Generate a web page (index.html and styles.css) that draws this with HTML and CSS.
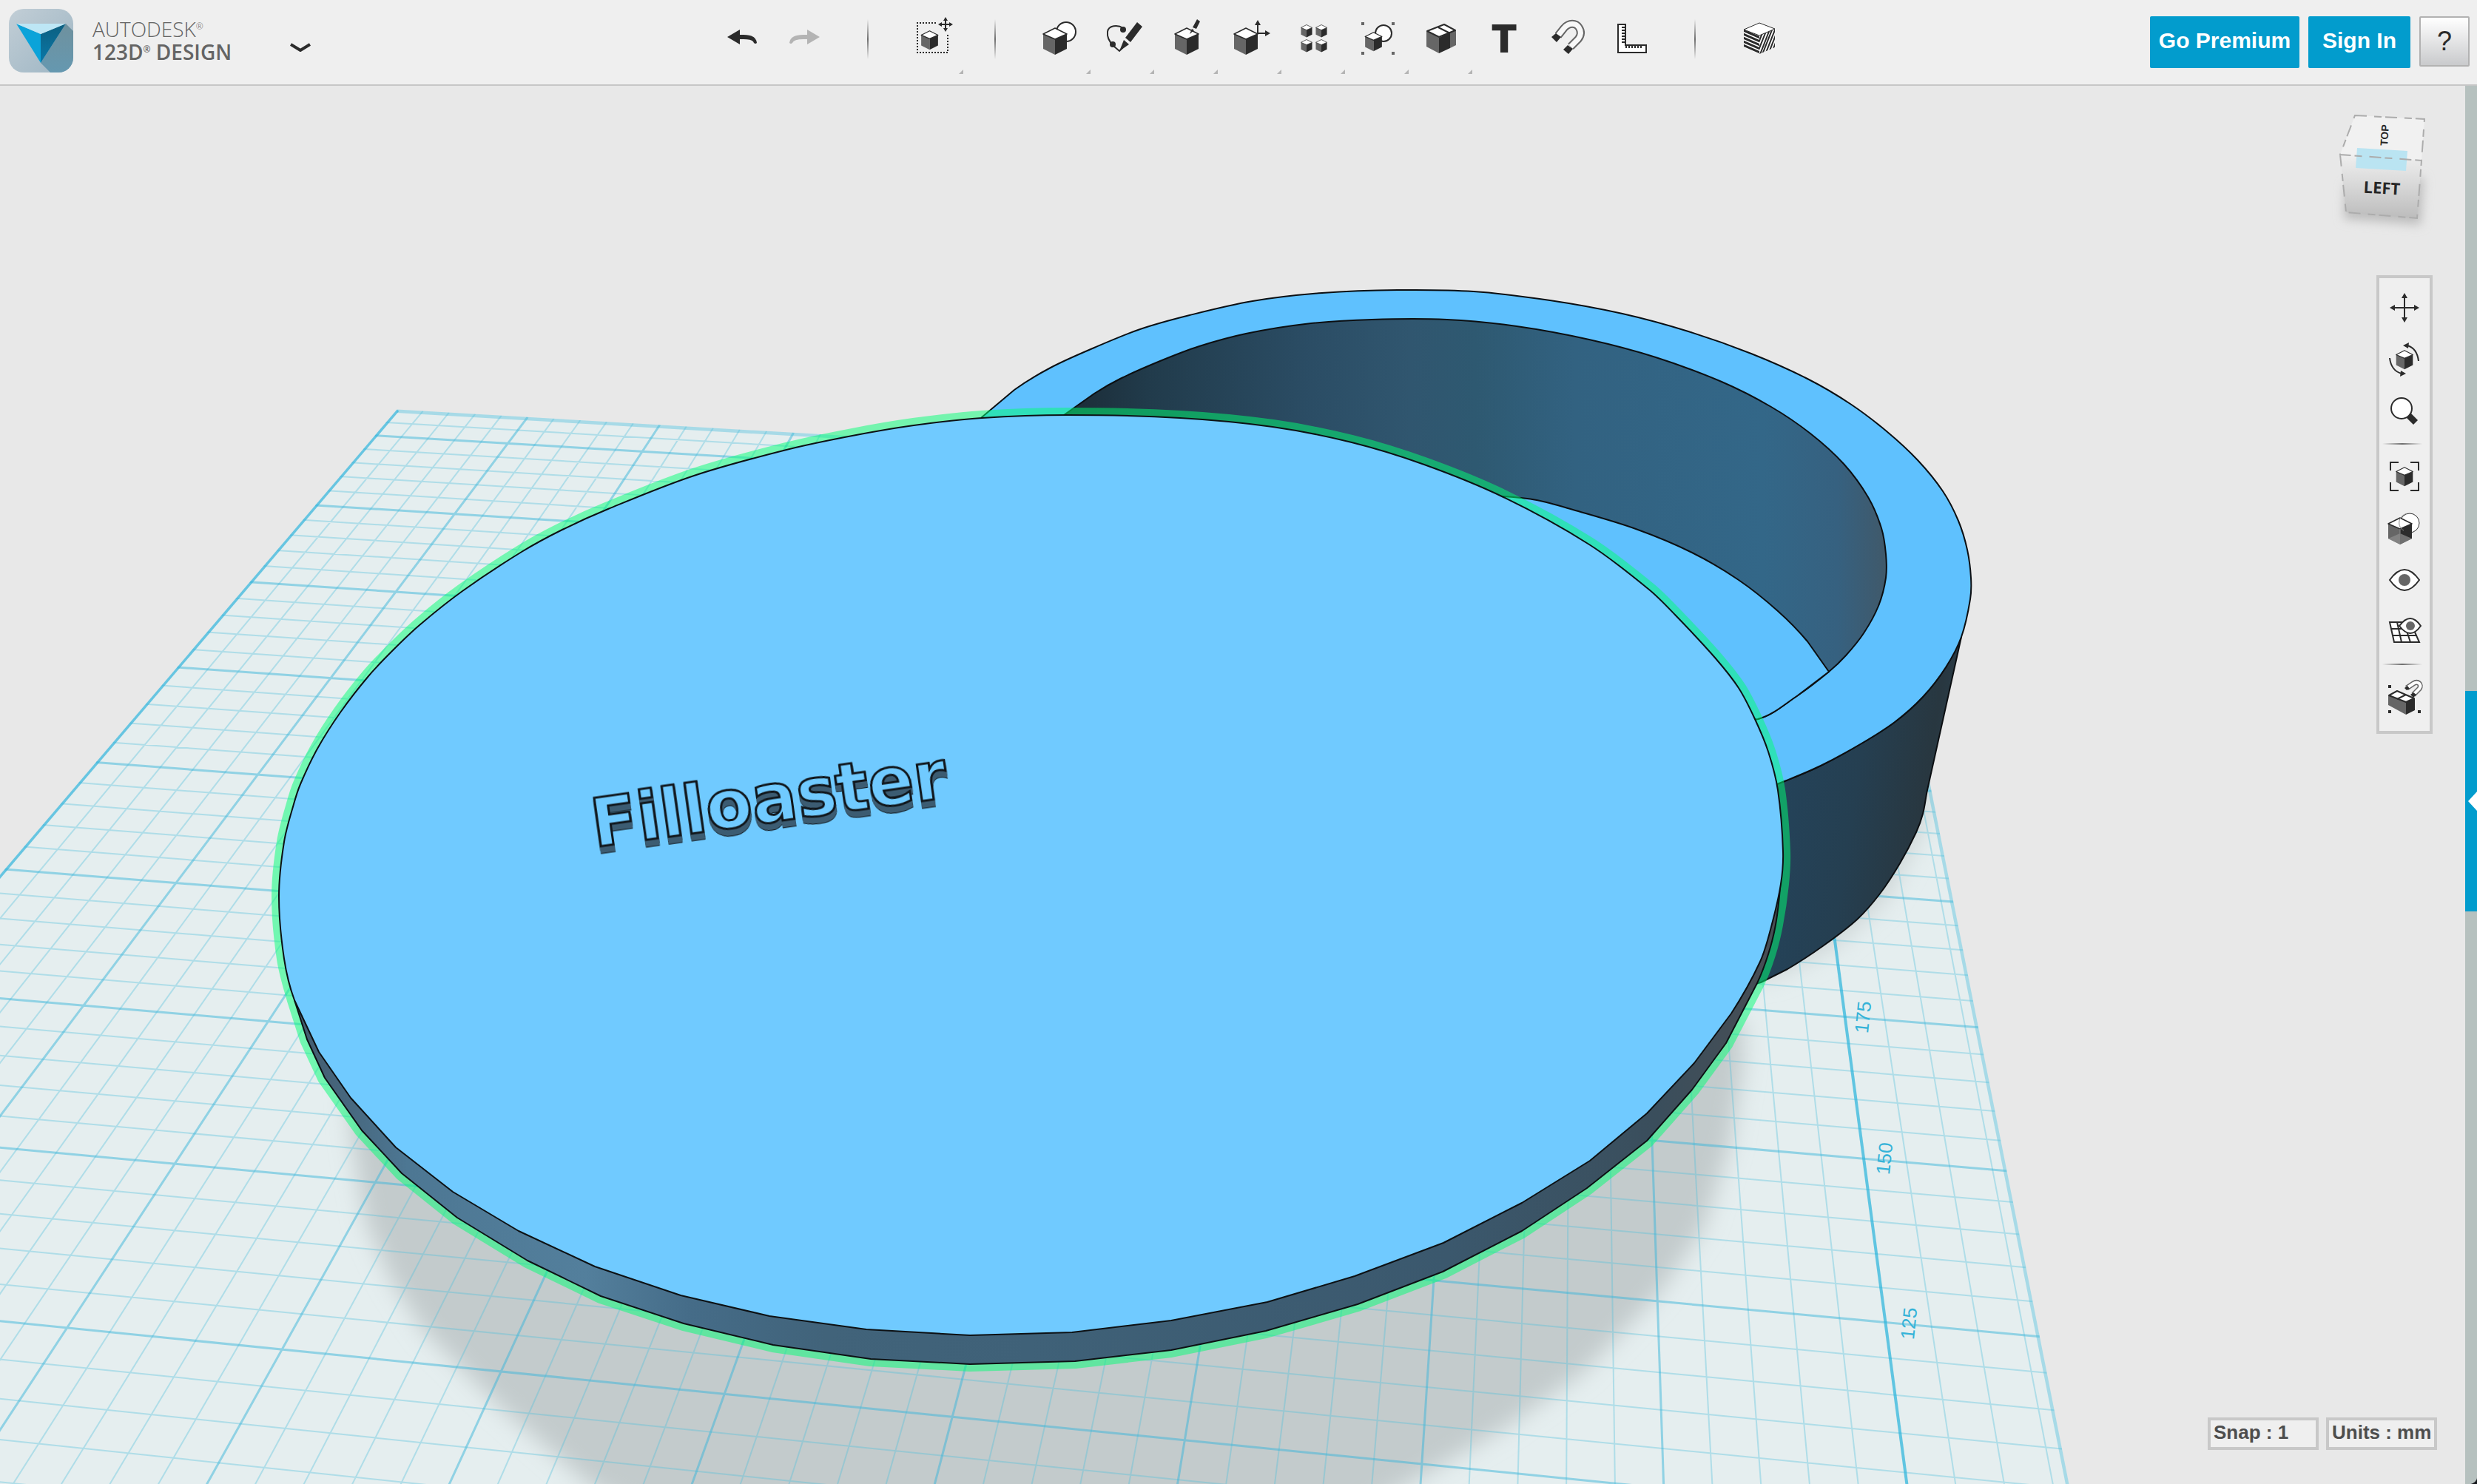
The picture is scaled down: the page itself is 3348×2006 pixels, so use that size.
FILE: index.html
```html
<!DOCTYPE html>
<html lang="en">
<head>
<meta charset="utf-8">
<title>Autodesk 123D Design</title>
<link rel="stylesheet" href="styles.css">
</head>
<body>
<svg class="defs" aria-hidden="true">
  <symbol id="cube" viewBox="-1 -1 34 38">
    <path fill="#666" d="M0 8L16 15V36L0 28Z"/>
    <path fill="#2b2b2b" d="M32 8L16 15V36L32 28Z"/>
    <path fill="#fff" stroke="#2b2b2b" stroke-width="1.6" stroke-linejoin="round" d="M16 0L32 8L16 15L0 8Z"/>
  </symbol>
  <symbol id="more" viewBox="0 0 6 6"><path fill="#b4b4b4" d="M6 0V6H0Z"/></symbol>
</svg>

<header class="topbar">
  <div class="brand">
    <svg class="logo" viewBox="0 0 87 86" aria-hidden="true">
      <defs>
        <linearGradient id="lg1" x1="0" y1="0" x2="1" y2="1"><stop offset="0" stop-color="#c2ced6"/><stop offset="1" stop-color="#9db5c3"/></linearGradient>
        <linearGradient id="lg2" x1="0" y1="0" x2="0" y2="1"><stop offset="0" stop-color="#6f919e"/><stop offset="1" stop-color="#6598b0"/></linearGradient>
        <linearGradient id="lg3" x1="0" y1="0" x2="0" y2="1"><stop offset="0" stop-color="#0d5f80"/><stop offset="1" stop-color="#0a78a8"/></linearGradient>
        <clipPath id="logoClip"><rect width="87" height="86" rx="20"/></clipPath>
      </defs>
      <g clip-path="url(#logoClip)">
        <rect width="87" height="86" fill="url(#lg1)"/>
        <path fill="url(#lg2)" d="M77 20L87 30V86H56L43 73Z"/>
        <path fill="#0ba3d9" d="M10 20L43 34V73Z"/>
        <path fill="url(#lg3)" d="M77 20L43 34V73Z"/>
        <path fill="#bde6f5" d="M10 20H77L43 34Z"/>
      </g>
    </svg>
    <div class="wordmark"><span class="maker">AUTODESK<sup>®</sup></span><span class="product">123D<sup>®</sup> DESIGN</span></div>
    <button class="app-menu" aria-label="Application menu"><svg viewBox="0 0 28 12"><path fill="none" stroke="#2b2b2b" stroke-width="4" d="M1 2L14 10L27 2"/></svg></button>
  </div>

  <nav class="tools" aria-label="Tools">
    <button class="tool" aria-label="Undo"><svg viewBox="0 0 86 114"><path fill="#2b2b2b" d="M25 50L42 40V47H47Q64 47 65 58Q63 60 61 58Q60 53 47 53H42V60Z"/></svg></button>
    <button class="tool" aria-label="Redo"><svg viewBox="0 0 86 114"><path fill="#b4b4b4" d="M64 50L47 40V47H42Q24 47 23 58Q25 60 27 58Q29 53 42 53H47V60Z"/></svg></button>
    <span class="divider"></span>
    <button class="tool" aria-label="Transform"><svg viewBox="0 0 86 114">
      <path fill="none" stroke="#2b2b2b" stroke-width="2" stroke-dasharray="2 2" d="M49 31H24V71H65V45"/>
      <use href="#cube" x="28" y="41" width="25" height="27"/>
      <path stroke="#2b2b2b" stroke-width="2" d="M62 26V40M55 33H69"/>
      <path fill="#2b2b2b" d="M62 23L65 28H59ZM62 43L65 38H59ZM52 33L57 30V36ZM72 33L67 30V36Z"/>
      <use href="#more" x="80" y="94" width="6" height="6"/></svg></button>
    <span class="divider"></span>
    <button class="tool" aria-label="Primitives"><svg viewBox="0 0 86 114"><circle cx="53" cy="43" r="13" fill="#fff" stroke="#2b2b2b" stroke-width="2"/><use href="#cube" x="21" y="37" width="34" height="38"/><use href="#more" x="80" y="94" width="6" height="6"/></svg></button>
    <button class="tool" aria-label="Sketch"><svg viewBox="0 0 86 114">
      <path fill="none" stroke="#2b2b2b" stroke-width="2" d="M44 38C37 33 24 34 23 43C22 51 27 58 31 62L39 69L46 62"/>
      <circle cx="44" cy="40" r="4" fill="#2b2b2b"/><circle cx="30" cy="60" r="4" fill="#2b2b2b"/>
      <path fill="#2b2b2b" d="M63 30L70 36L54 57L47 51ZM45 54L52 60L39 69Z"/>
      <use href="#more" x="80" y="94" width="6" height="6"/></svg></button>
    <button class="tool" aria-label="Construct"><svg viewBox="0 0 86 114"><use href="#cube" x="27" y="37" width="34" height="38"/><path fill="#2b2b2b" d="M58 26L62 29L57 39L52 37ZM51 39L54 41L48 46Z"/><use href="#more" x="80" y="94" width="6" height="6"/></svg></button>
    <button class="tool" aria-label="Modify"><svg viewBox="0 0 86 114"><use href="#cube" x="21" y="37" width="34" height="38"/><path fill="none" stroke="#2b2b2b" stroke-width="2" d="M54 33V45H65"/><path fill="#2b2b2b" d="M54 27L58 34H50ZM71 45L64 41V49Z"/><use href="#more" x="80" y="94" width="6" height="6"/></svg></button>
    <button class="tool" aria-label="Pattern"><svg viewBox="0 0 86 114"><use href="#cube" x="26" y="33" width="16" height="18"/><use href="#cube" x="46" y="33" width="16" height="18"/><use href="#cube" x="26" y="53" width="16" height="18"/><use href="#cube" x="46" y="53" width="16" height="18"/><use href="#more" x="80" y="94" width="6" height="6"/></svg></button>
    <button class="tool" aria-label="Grouping"><svg viewBox="0 0 86 114"><path fill="#666" d="M22 30h4v4h-4zM63 30h4v4h-4zM22 70h4v4h-4zM63 70h4v4h-4z"/><circle cx="52" cy="45" r="11" fill="#fff" stroke="#2b2b2b" stroke-width="2"/><use href="#cube" x="26" y="43" width="25" height="27"/><use href="#more" x="80" y="94" width="6" height="6"/></svg></button>
    <button class="tool" aria-label="Combine"><svg viewBox="0 0 86 114"><path fill="#666" d="M24 42L41 51V72L24 63ZM56 44L64 41V61L56 65Z"/><path fill="#2b2b2b" d="M41 51L56 44V65L41 72Z"/><path fill="#fff" stroke="#2b2b2b" stroke-width="2" stroke-linejoin="round" d="M25 42L48 33L63 41L41 50Z"/><path stroke="#2b2b2b" stroke-width="2" d="M40 37L56 45"/><use href="#more" x="80" y="94" width="6" height="6"/></svg></button>
    <button class="tool tool-text" aria-label="Text">T</button>
    <button class="tool" aria-label="Snap"><svg viewBox="0 0 86 114">
      <g fill="none"><path stroke="#666" stroke-width="11" d="M30 48L38 38C45 30 54 31 58 37C62 43 61 48 57 53L47 63"/><path stroke="#f8f8f8" stroke-width="7" d="M30 48L38 38C45 30 54 31 58 37C62 43 61 48 57 53L47 63"/></g>
      <path fill="#2b2b2b" d="M21 50L27 45L34 50L28 57ZM37 67L43 61L50 66L44 73Z"/></svg></button>
    <button class="tool" aria-label="Measure"><svg viewBox="0 0 86 114"><path fill="#fff" stroke="#2b2b2b" stroke-width="2" d="M25 33H35V61H63V71H25Z"/><path stroke="#2b2b2b" stroke-width="2" d="M30 37H35M30 41H35M30 45H35M30 49H35M30 53H35M30 57H35M36 65V61M40 65V61M44 65V61M48 65V61M52 65V61M56 65V61"/></svg></button>
    <span class="divider"></span>
    <button class="tool" aria-label="Material"><svg viewBox="0 0 86 114">
      <defs><clipPath id="mr"><path d="M44 48L65 39V64L44 73Z"/></clipPath><clipPath id="ml"><path d="M44 48L23 40V64L44 73Z"/></clipPath></defs>
      <path fill="#fff" d="M44 31L65 39V64L44 73L23 64V40Z"/>
      <g stroke="#2b2b2b" stroke-width="3" clip-path="url(#ml)"><path d="M22 41L45 51M22 46L45 56M22 51L45 61M22 56L45 66M22 61L45 71M22 66L45 76"/></g>
      <g stroke="#2b2b2b" stroke-width="2" clip-path="url(#mr)"><path d="M50 40L38 70M54 40L42 70M58 40L44 76M62 38L47 76M66 38L51 76M69 40L55 76M72 42L59 76M75 45L63 76"/></g>
      <path fill="#fff" stroke="#2b2b2b" stroke-width="1" d="M44 31L65 39L44 48L23 40Z"/></svg></button>
  </nav>

  <div class="account">
    <button class="primary premium">Go Premium</button>
    <button class="primary signin">Sign In</button>
    <button class="help" aria-label="Help">?</button>
  </div>
</header>

<main class="workspace">
  <svg class="scene" viewBox="0 116 3348 1890" preserveAspectRatio="xMidYMid slice" role="img" aria-label="Round box with engraved lid on the work plane">
    <defs>
      <linearGradient id="inner" gradientUnits="userSpaceOnUse" x1="1440" y1="0" x2="2550" y2="0">
        <stop offset="0" stop-color="#1b2b36"/><stop offset=".1" stop-color="#213b4b"/><stop offset=".3" stop-color="#2b4d65"/><stop offset=".42" stop-color="#30566f"/><stop offset=".5" stop-color="#2e5971"/><stop offset=".62" stop-color="#326281"/><stop offset=".85" stop-color="#336788"/><stop offset=".94" stop-color="#366180"/><stop offset="1" stop-color="#40596a"/>
      </linearGradient>
      <linearGradient id="outer" gradientUnits="userSpaceOnUse" x1="2390" y1="1150" x2="2650" y2="1190">
        <stop offset="0" stop-color="#24435a"/><stop offset=".4" stop-color="#253f51"/><stop offset=".75" stop-color="#283740"/><stop offset="1" stop-color="#2b4352"/>
      </linearGradient>
      <linearGradient id="rim" gradientUnits="userSpaceOnUse" x1="390" y1="0" x2="2400" y2="0">
        <stop offset="0" stop-color="#41586a"/><stop offset=".08" stop-color="#4d7793"/><stop offset=".2" stop-color="#537f9c"/><stop offset=".27" stop-color="#456c88"/><stop offset=".36" stop-color="#41637a"/><stop offset=".5" stop-color="#3f6178"/><stop offset=".78" stop-color="#3b586d"/><stop offset=".92" stop-color="#3a4e5c"/><stop offset="1" stop-color="#484e54"/>
      </linearGradient>
      <filter id="soft" x="-10%" y="-10%" width="120%" height="120%"><feGaussianBlur stdDeviation="15"/></filter>
      <clipPath id="bedClip"><path id="bedShape" d=""/></clipPath>
    </defs>
    <g clip-path="url(#bedClip)">
      <rect y="116" width="3348" height="1890" fill="#e5eeef"/>
      <g filter="url(#soft)">
        <path fill="#c3cbcc" d="M465 1400L476 1540L494 1650L529 1730L574 1800L674 1900L800 2010L900 2060H1800L1904 2006L2034 1930L2141 1854L2241 1750L2302 1660L2338 1548L2356 1440L2356 1380L1400 1200Z"/>
        <path fill="#cdd5d6" d="M2300 1330L2400 1320L2480 1280L2550 1215L2600 1120L2612 1050L2500 1000Z"/>
      </g>
    </g>
    <g id="grid" fill="none" clip-path="url(#bedClip)"></g>
    <g class="ruler">
      <text transform="translate(2527 1376) rotate(-84)">175</text>
      <text transform="translate(2556 1567) rotate(-84)">150</text>
      <text transform="translate(2589 1790) rotate(-84)">125</text>
    </g>

    <g stroke="#0c0f12" stroke-width="2" stroke-linejoin="round">
      <path class="round" fill="url(#outer)" d="M2300 1100L2412 1056L2461 1035L2516 1005L2561 976L2599 942L2630 902L2651 861L2605 1068L2599 1100L2590 1125L2568 1167L2541 1208L2510 1243L2465 1278L2416 1310L2380 1328L2300 1350Z"/>
      <path class="round" fill="#5fc1fe" d="M1327 564L1371 527L1420 497L1479 470L1541 445L1608 426L1693 407L1787 396L1889 392L1992 394L2095 406L2193 424L2282 448L2367 478L2443 512L2501 546L2550 583L2592 622L2626 664L2647 704L2659 743L2664 781L2663 810L2651 861L2630 902L2599 942L2561 976L2516 1005L2461 1035L2412 1056L2300 1100L1700 900Z"/>
      <path class="round" fill="url(#inner)" d="M1438 561L1479 532L1514 512L1568 488L1621 468L1684 451L1764 438L1854 432L1956 432L2050 441L2148 459L2238 483L2327 516L2394 550L2447 586L2492 627L2525 672L2543 714L2549 749L2549 781L2539 819L2519 856L2495 886L2472 908L2430 940L2376 972L2200 1000Z"/>
      <path class="round" fill="#5fc1fe" d="M1960 668L2032 671L2077 676L2126 689L2211 715L2287 747L2350 784L2403 826L2443 867L2472 908L2430 940L2376 972L2200 1000Z"/>
    </g>

    <path class="round" fill="none" stroke="#00ff73" stroke-opacity=".5" stroke-width="20" stroke-linejoin="round" d="M1327 565L1443 561L1595 565L1720 577L1827 598L1925 628L2032 672L2148 736L2229 797L2265 832L2318 889L2350 930L2372 972L2390 1016L2403 1068L2410 1151L2408 1195L2400 1250L2390 1290L2375 1329L2333 1410L2287 1473L2226 1542L2145 1606L2057 1664L1950 1719L1835 1763L1711 1799L1583 1825L1453 1840L1311 1844L1177 1837L1045 1818L924 1789L812 1752L713 1704L618 1646L543 1586L489 1528L439 1457L415 1405L398 1352L384 1296L377 1212L384 1138L397 1087L406 1060L429 1012L460 963L498 914L530 880L567 845L625 799L705 746L760 716L822 688L938 643L1063 608L1152 589L1235 575Z"/>
    <g stroke="#0d1114" stroke-width="2" stroke-linejoin="round">
      <path class="round" fill="url(#rim)" d="M2408 1151L2406 1200L2400 1250L2390 1290L2375 1329L2333 1410L2287 1473L2226 1542L2145 1606L2057 1664L1950 1719L1835 1763L1711 1799L1583 1825L1453 1840L1311 1844L1177 1837L1045 1818L924 1789L812 1752L713 1704L618 1646L543 1586L489 1528L439 1457L415 1405L398 1352L1300 1000Z"/>
      <path class="round" fill="#70caff" d="M1327 565L1443 561L1595 565L1720 577L1827 598L1925 628L2032 672L2148 736L2229 797L2265 832L2318 889L2350 930L2372 972L2390 1016L2403 1068L2410 1151L2407 1195L2394 1253L2379 1300L2340 1370L2290 1437L2226 1505L2149 1569L2057 1626L1951 1680L1831 1725L1713 1760L1583 1785L1449 1801L1311 1805L1171 1797L1040 1779L920 1751L804 1712L701 1664L612 1611L535 1551L474 1484L431 1422L398 1352L384 1296L377 1212L384 1138L397 1087L406 1060L429 1012L460 963L498 914L530 880L567 845L625 799L705 746L760 716L822 688L938 643L1063 608L1152 589L1235 575Z"/>
    </g>
    <text class="engraving" transform="translate(804 1145) rotate(-8)">Filloaster</text>
  </svg>

  <div class="overlay">
    <svg class="viewcube" viewBox="3150 144 138 188" role="img" aria-label="View cube">
      <defs>
        <linearGradient id="vc" x1="0" y1="0" x2="0" y2="1"><stop offset="0" stop-color="#efefef"/><stop offset=".4" stop-color="#dcdcdc"/><stop offset="1" stop-color="#bcbcbc"/></linearGradient>
        <filter id="vcs" x="-30%" y="-30%" width="160%" height="160%"><feGaussianBlur stdDeviation="7"/></filter>
      </defs>
      <path fill="#bdbdbd" filter="url(#vcs)" d="M3170 250L3276 240L3272 304L3168 296Z"/>
      <path fill="url(#vc)" d="M3163 209L3273 217L3267 295L3171 287Z"/>
      <path fill="#f1f1f1" d="M3183 156L3277 161L3273 217L3163 209Z"/>
      <path fill="#bae4f2" d="M3186 200L3254 204L3252 231L3184 227Z"/>
      <path fill="none" stroke="#acacac" stroke-width="2" stroke-dasharray="16 10 10 5" d="M3183 156L3277 161L3273 217L3163 209ZM3163 209L3171 287L3267 295L3273 217"/>
      <text class="face" font-size="22" transform="translate(3219 262) rotate(3)">LEFT</text>
      <text class="face narrow" font-size="14" transform="translate(3228 183) rotate(-86)">TOP</text>
    </svg>

    <nav class="view-panel" aria-label="View">
      <button aria-label="Pan"><svg viewBox="0 0 68 70"><path stroke="#2b2b2b" stroke-width="2" d="M34 18V52M18 35H50"/><path fill="#2b2b2b" d="M34 15L38 22H30ZM34 55L38 48H30ZM14 35L21 31V39ZM54 35L47 31V39Z"/></svg></button>
      <button aria-label="Orbit"><svg viewBox="0 0 68 70"><use href="#cube" x="22" y="22" width="24" height="27"/><path fill="none" stroke="#2b2b2b" stroke-width="2" d="M53 37Q51 20 38 16M14 33Q16 50 30 54"/><path fill="#2b2b2b" d="M32 16L40 12L39 20ZM36 54L29 50L28 58Z"/></svg></button>
      <button aria-label="Zoom"><svg viewBox="0 0 68 70"><path fill="#2b2b2b" d="M37 44L43 38L52 47L46 53Z"/><circle cx="30" cy="31" r="14" fill="#fff" stroke="#2b2b2b" stroke-width="2"/></svg></button>
      <hr>
      <button aria-label="Fit"><svg viewBox="0 0 68 70"><path fill="none" stroke="#2b2b2b" stroke-width="2" d="M26 16H15V27M42 16H53V27M26 54H15V43M42 54H53V43"/><use href="#cube" x="22" y="22" width="24" height="27"/></svg></button>
      <button aria-label="Display style"><svg viewBox="0 0 68 70"><circle cx="41" cy="28" r="13" fill="#fff" stroke="#2b2b2b"/><use href="#cube" x="11" y="20" width="34" height="38"/><path fill="#8e8e8e" fill-opacity=".7" d="M12 49L28 42L44 49L28 57Z"/><path fill="none" stroke="#888" d="M38 15C24 18 24 34 33 38M28 36V42"/></svg></button>
      <button aria-label="Visibility"><svg viewBox="0 0 68 70"><path fill="#fff" stroke="#2b2b2b" stroke-width="2" d="M14 35Q34 7 54 35Q34 63 14 35Z"/><circle cx="34" cy="35" r="8" fill="#666"/></svg></button>
      <button aria-label="Grid visibility"><svg viewBox="0 0 68 70"><path fill="#fff" stroke="#2b2b2b" stroke-width="2" d="M14 22H42L54 49H20ZM16 31H47M18 40H51M24 22L30 49M33 22L42 49"/><path fill="#fff" stroke="#2b2b2b" stroke-width="2" d="M27 27Q42 7 56 27Q42 47 27 27Z"/><circle cx="42" cy="27" r="6" fill="#666"/></svg></button>
      <hr>
      <button aria-label="Object snap"><svg viewBox="0 0 68 70"><path fill="#2b2b2b" d="M12 19h4v4h-4zM12 53h4v4h-4zM52 53h4v4h-4zM36 42L48 37V53L36 59Z"/><path fill="#666" d="M12 33L36 42V59L12 46Z"/><path fill="#fff" stroke="#2b2b2b" stroke-width="2" stroke-linejoin="round" d="M13 33L24 27L47 37L36 42Z"/><path stroke="#2b2b2b" stroke-width="2" d="M36 32L24 38"/><g fill="none"><path stroke="#666" stroke-width="7" d="M37 23L46 17C52 13 58 18 54 24L46 32"/><path stroke="#fff" stroke-width="4" d="M37 23L46 17C52 13 58 18 54 24L46 32"/></g><path fill="#2b2b2b" d="M34 23L38 20L41 24L37 26ZM42 32L46 29L50 32L46 36Z"/></svg></button>
    </nav>

    <div class="status">
      <button>Snap : 1</button>
      <button>Units : mm</button>
    </div>
  </div>

  <aside class="rail"><button class="rail-handle" aria-label="Open parts library"><svg viewBox="0 0 14 26"><path fill="#fff" d="M14 0V26L2 13Z"/></svg></button></aside>
</main>
<script src="grid.js"></script>
</body>
</html>
```

FILE: styles.css
```css
* { box-sizing: border-box; }

body {
  margin: 0;
  height: 100vh;
  display: flex;
  flex-direction: column;
  background: #15181c;
  font-family: "Liberation Sans", Arial, sans-serif;
  overflow: hidden;
}

button {
  margin: 0;
  padding: 0;
  border: 0;
  background: none;
  font: inherit;
  color: inherit;
}

svg { display: block; }

.defs {
  position: absolute;
  width: 0;
  height: 0;
}

/* Top bar */
.topbar {
  flex: none;
  display: grid;
  grid-template-columns: 958fr auto 928fr;
  height: 116px;
  background: #efefef;
  border-bottom: 2px solid #c6c6c6;
}

.brand {
  display: flex;
  align-items: flex-start;
  padding: 12px 0 0 12px;
  min-width: 0;
}

.logo { width: 87px; height: 86px; }

.wordmark {
  margin: 12px 0 0 26px;
  color: #646464;
  font-family: "Open Sans", "Noto Sans", sans-serif;
  font-size: 28px;
  line-height: 31px;
  white-space: nowrap;
}

.wordmark span { display: block; }
.wordmark sup {
  font-size: 12px;
  line-height: 12px;
  vertical-align: 10px;
}
.maker { font-weight: 300; }
.product { font-weight: 600; }

.app-menu {
  margin: 46px 0 0 79px;
}
.app-menu svg { width: 28px; height: 12px; }

.tools { display: flex; }

.tool,
.divider {
  width: 86px;
  height: 114px;
}

.tool svg { width: 86px; height: 114px; }

.tool-text {
  color: #2b2b2b;
  font: 900 52px/62px Inter, sans-serif;
  padding-bottom: 8px;
}

.divider {
  background: linear-gradient(rgba(110, 110, 110, 0), #6e6e6e, rgba(110, 110, 110, 0)) center 26px / 2px 54px no-repeat;
}

.account {
  display: flex;
  justify-content: flex-end;
  align-items: flex-start;
  gap: 12px;
  padding: 22px 10px 0 0;
}

.primary {
  height: 70px;
  border-radius: 2px;
  background: #029ccd;
  color: #fff;
  font-weight: 700;
  font-size: 30px;
  padding-bottom: 4px;
}
.premium { width: 202px; }
.signin { width: 138px; }

.help {
  width: 68px;
  height: 68px;
  border: 2px solid #b2b2b2;
  border-radius: 2px;
  background: linear-gradient(#fff, #c9cacc);
  color: #2b2b2b;
  font-size: 36px;
}

/* Workspace */
.workspace {
  position: relative;
  flex: 1;
  min-height: 0;
  display: flex;
  justify-content: flex-end;
  background: #e8e8e8;
  border-bottom-right-radius: 10px;
  overflow: hidden;
}

.scene {
  position: absolute;
  inset: 0;
  width: 100%;
  height: 100%;
}

.ruler text {
  font: 26px "Liberation Sans Narrow", "Liberation Sans", sans-serif;
  fill: #35b3d8;
  text-anchor: middle;
}

.engraving {
  font: 700 91px "DejaVu Sans", sans-serif;
  fill: #70caff;
  stroke: #10161b;
  stroke-width: 3px;
  filter: drop-shadow(0 4px 0 #3c5c72) drop-shadow(0 4px 0 #3c5c72) drop-shadow(0 1px 0 #10161b);
}

.overlay {
  position: relative;
  display: flex;
  flex-direction: column;
  align-items: flex-end;
  padding: 28px 38px 46px 0;
}

.viewcube {
  width: 138px;
  height: 188px;
  margin-right: 6px;
  overflow: visible;
}

.face {
  font-family: "Open Sans", sans-serif;
  font-weight: 700;
  fill: #262626;
  text-anchor: middle;
}
.face.narrow { font-family: "Liberation Sans Narrow", "Liberation Sans", sans-serif; }

.view-panel {
  width: 76px;
  margin: 40px 6px 0 0;
  padding: 5px 0 11px;
  border: 4px solid #c8c8c8;
  background: #efefef;
}

.view-panel button { display: block; }
.view-panel svg { width: 68px; height: 70px; }

.view-panel hr {
  height: 18px;
  margin: 0;
  border: 0;
  background: linear-gradient(90deg, rgba(110, 110, 110, 0), #6e6e6e, rgba(110, 110, 110, 0)) 4px center / 54px 2px no-repeat;
}

.status {
  display: flex;
  gap: 10px;
  margin-top: auto;
}

.status button {
  width: 150px;
  height: 44px;
  padding: 0 0 4px 4px;
  border: 4px solid #c8c8c8;
  background: #efefef;
  color: #4d4d4d;
  font-weight: 700;
  font-size: 26px;
  line-height: 32px;
  text-align: left;
  white-space: nowrap;
}

.rail {
  position: relative;
  flex: none;
  width: 16px;
  display: flex;
  flex-direction: column;
  background: #b6c1bf;
}
.rail::before { content: ""; flex: 818; }
.rail::after { content: ""; flex: 774; }

.rail-handle {
  height: 298px;
  background: #029ccd;
}
.rail-handle svg { width: 14px; height: 26px; margin-left: 2px; }
```

FILE: grid.js
```js
// Known points of the work plane: [column, row, scene x, scene y].
const anchors = [
  [0, -2, 536, 553], [0, 0, 506, 589], [0, 10, 339, 787], [0, 20, 131, 1031], [0, 25, 6, 1175],
  [10, -2, 891, 574], [15, -2, 1073, 585], [15, 40, 380, 1824], [15, 35, 506, 1598],
  [50, 35, 2549, 1787], [50, 30, 2519, 1567], [50, 25, 2494, 1375], [45, 35, 2241, 1758], [40, 35, 1940, 1731], [40, 40, 1921, 1979],
  [53.33, 35, 2756, 1807], [53.33, 30, 2712, 1582], [53.33, 25, 2673, 1389], [53.33, 20, 2641, 1219]
];

// Least-squares projective map from plane to scene.
function solveProjection(points) {
  const n = 8;
  const m = Array.from({ length: n }, () => new Array(n + 1).fill(0));
  const add = (row, value) => {
    for (let i = 0; i < n; i++) {
      for (let j = 0; j < n; j++) m[i][j] += row[i] * row[j];
      m[i][n] += row[i] * value;
    }
  };
  for (const [c, r, px, py] of points) {
    const u = c / 50, v = r / 50, x = px / 1000, y = py / 1000;
    add([u, v, 1, 0, 0, 0, -u * x, -v * x], x);
    add([0, 0, 0, u, v, 1, -u * y, -v * y], y);
  }
  for (let i = 0; i < n; i++) {
    let p = i;
    for (let k = i + 1; k < n; k++) if (Math.abs(m[k][i]) > Math.abs(m[p][i])) p = k;
    [m[i], m[p]] = [m[p], m[i]];
    for (let k = 0; k < n; k++) {
      if (k === i) continue;
      const f = m[k][i] / m[i][i];
      for (let j = i; j <= n; j++) m[k][j] -= f * m[i][j];
    }
  }
  return m.map((row, i) => row[n] / row[i]);
}

const h = solveProjection(anchors);
const project = (c, r) => {
  const u = c / 50, v = r / 50;
  const w = h[6] * u + h[7] * v + 1;
  return [(h[0] * u + h[1] * v + h[2]) / w * 1000, (h[3] * u + h[4] * v + h[5]) / w * 1000]
    .map(value => value.toFixed(1)).join(" ");
};

const right = 53.33, top_ = -2, bottom = 48;
document.getElementById("bedShape").setAttribute("d",
  `M${project(0, top_)}L${project(right, top_)}L${project(right, bottom)}L${project(0, bottom)}Z`);

const grid = document.getElementById("grid");
function layer(segments, color, width) {
  const path = document.createElementNS("http://www.w3.org/2000/svg", "path");
  path.setAttribute("d", segments.map(([a, b, c, d]) => `M${project(a, b)}L${project(c, d)}`).join(""));
  path.setAttribute("stroke", color);
  path.setAttribute("stroke-width", width);
  grid.append(path);
}

const minor = [], major = [];
for (let c = 1; c <= 53; c++) if (c !== 50) (c % 5 ? minor : major).push([c, top_, c, bottom]);
for (let r = -1; r < bottom; r++) (r % 5 ? minor : major).push([0, r, right, r]);

layer(minor, "rgba(80,190,220,.36)", 2);
layer(major, "rgba(60,182,218,.5)", 3);
layer([[right, top_, right, bottom], [0, top_, right, top_]], "rgba(80,190,220,.42)", 9);
layer([[0, top_, 0, bottom]], "rgba(50,180,220,.7)", 7);
layer([[50, top_, 50, bottom]], "rgba(40,180,220,.7)", 4);

// Rounds the outlines of the solids. Sharp corners and the coarse facets
// on the near side of the lid stay straight.
const facetLine = 1300;

function roundOutline(path) {
  const pts = path.getAttribute("d").match(/\d+ \d+/g).map(pair => pair.split(" ").map(Number));
  const at = i => pts[(i + pts.length) % pts.length];
  const tangent = i => {
    const a = at(i - 1), b = at(i), c = at(i + 1);
    const turn = Math.atan2(c[1] - b[1], c[0] - b[0]) - Math.atan2(b[1] - a[1], b[0] - a[0]);
    if (Math.cos(turn) < 0.88) return null;
    const len = Math.hypot(c[0] - a[0], c[1] - a[1]);
    return [(c[0] - a[0]) / len, (c[1] - a[1]) / len];
  };
  const parts = ["M" + pts[0].join(" ")];
  pts.forEach((p, i) => {
    const q = at(i + 1);
    const reach = Math.hypot(q[0] - p[0], q[1] - p[1]) / 3;
    const s = tangent(i), t = tangent(i + 1);
    if ((p[1] > facetLine && q[1] > facetLine) || !s || !t) {
      parts.push("L" + q.join(" "));
    } else {
      parts.push("C" + [p[0] + s[0] * reach, p[1] + s[1] * reach, q[0] - t[0] * reach, q[1] - t[1] * reach, q[0], q[1]].join(" "));
    }
  });
  path.setAttribute("d", parts.join("") + "Z");
}

document.querySelectorAll("path.round").forEach(roundOutline);
```
